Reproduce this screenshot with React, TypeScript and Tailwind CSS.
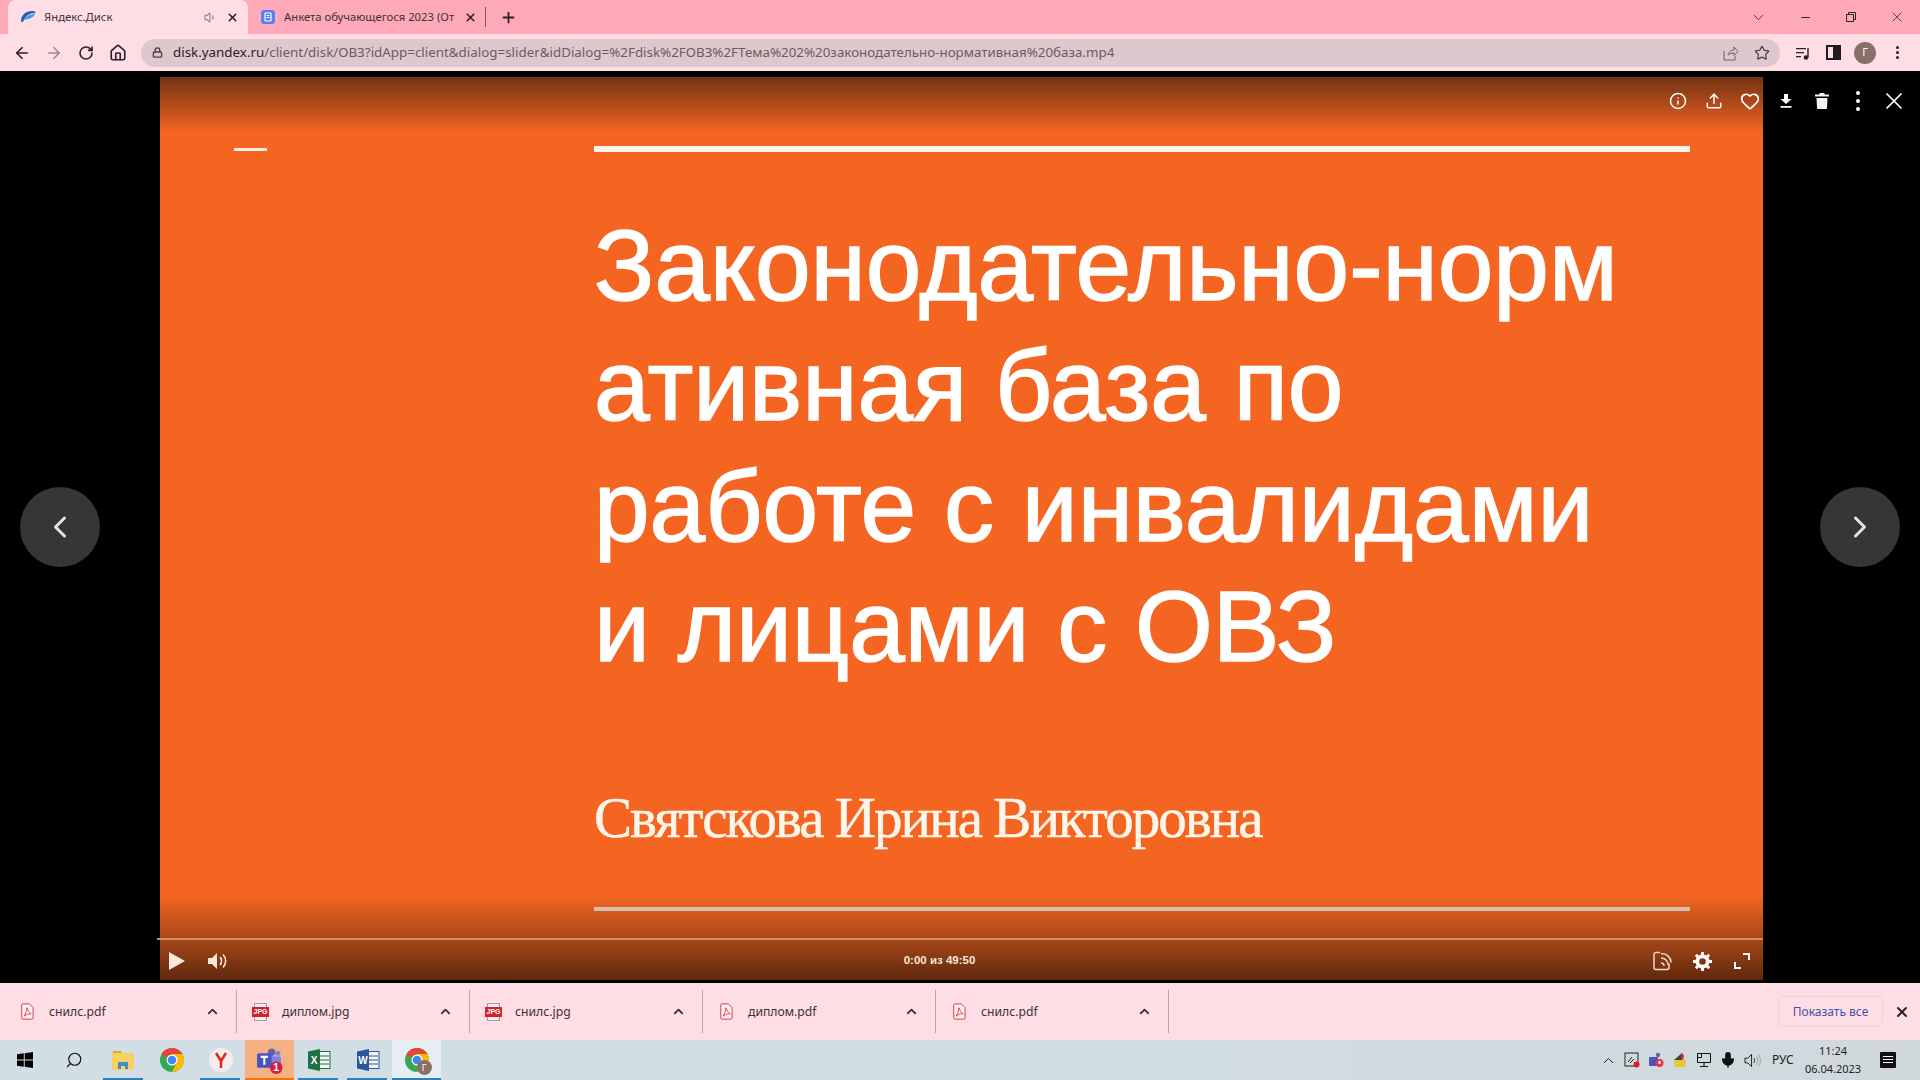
import { ArrowLeft, ArrowRight, RotateCw, Home, Lock, Star, Plus, X, ChevronDown, ChevronUp, ChevronLeft, ChevronRight, Minus, Info, Upload, Heart, Search, Mic, Volume1 } from "lucide-react";

const ui = "font-['Noto_Sans','Open_Sans',sans-serif]";

function YandexDiskIcon() {
  return (
    <svg viewBox="0 0 16 16" className="w-4 h-4">
      <path d="M1 12 C1 6 6 2 12 2 C15 2 16 3 15 4.500 C11 3.500 6 6 3.500 12 C2.800 13.500 1 13.500 1 12Z" fill="#1f5fb8" />
      <path d="M4 11 C6 7 10 5 15 5 C14 8 10 10 4 11Z" fill="#3fa3f0" />
    </svg>
  );
}

function FormsIcon() {
  return (
    <svg viewBox="0 0 16 16" className="w-4 h-4">
      <rect x="1" y="1" width="14" height="14" rx="3" fill="#5a7ff0" />
      <rect x="5" y="4" width="6" height="8" rx="0.500" fill="none" stroke="#fff" strokeWidth="1.200" />
      <path d="M6.500 6.500h3M6.500 8.500h3" stroke="#fff" strokeWidth="1" />
    </svg>
  );
}

function PdfIcon() {
  return (
    <svg viewBox="0 0 14 18" className="w-[13px] h-[17px]">
      <path d="M2 .8h7l4 4v11a1.400 1.400 0 0 1-1.400 1.400H2A1.400 1.400 0 0 1 .8 15.800V2A1.400 1.400 0 0 1 2 .8Z" fill="#fff0f2" stroke="#d8303a" strokeWidth="1" />
      <path d="M6.500 5c1 3 2 5 4.500 6.500-2.500-.3-5 .2-7.500 2.500 1.500-2.500 2.500-5.500 3-9Z" fill="none" stroke="#d8303a" strokeWidth="0.900" />
    </svg>
  );
}

function JpgIcon() {
  return (
    <div className="relative w-[17px] h-[18px] flex items-center justify-center">
      <div className="absolute left-[2px] top-0 w-[13px] h-[18px] border border-[#a89aa0] bg-[#f4eef0]" />
      <span className="relative w-[17px] h-[10px] bg-[#d2232a] text-white text-[7px] leading-[10px] font-bold text-center font-['Liberation_Sans',sans-serif]">JPG</span>
    </div>
  );
}

function ChromeIcon({ size = 24 }: { size?: number }) {
  return (
    <svg viewBox="0 0 24 24" width={size} height={size}>
      <circle cx="12" cy="12" r="12" fill="#34a853" />
      <path d="M12 0A12 12 0 0 1 22.400 6L12 6 5 9.500 1.600 6A12 12 0 0 1 12 0Z" fill="#ea4335" />
      <path d="M22.400 6A12 12 0 0 1 12 24L17 14 12 6Z" fill="#fbbc05" />
      <circle cx="12" cy="12" r="5.500" fill="#fff" />
      <circle cx="12" cy="12" r="4.300" fill="#4285f4" />
    </svg>
  );
}

function WindowsIcon() {
  return (
    <svg viewBox="0 0 16 16" className="w-4 h-4" fill="#000">
      <path d="M0 2.300 6.800 1.300V7.500H0ZM7.700 1.200 16 0V7.500H7.700ZM0 8.500H6.800V14.700L0 13.700ZM7.700 8.500H16V16L7.700 14.800Z" />
    </svg>
  );
}

function ExplorerIcon() {
  return (
    <svg viewBox="0 0 24 24" className="w-6 h-6">
      <path d="M2 3h8l2 3H2Z" fill="#e8a81c" />
      <rect x="1" y="5" width="22" height="17" fill="#f6d264" />
      <path d="M7 14h10v7H14v-3h-4v3H7Z" fill="#3d8fc4" />
    </svg>
  );
}

function YandexIcon() {
  return (
    <svg viewBox="0 0 24 24" className="w-6 h-6">
      <circle cx="12" cy="12" r="12" fill="#f1eeec" />
      <path d="M7 5l5 8 5-8M12 13v7" fill="none" stroke="#e8252a" strokeWidth="2.600" />
    </svg>
  );
}

function TeamsIcon() {
  return (
    <svg viewBox="0 0 26 26" className="w-[27px] h-[27px]">
      <circle cx="15" cy="5" r="3.500" fill="#6264a7" />
      <circle cx="21" cy="6" r="2.500" fill="#7b83eb" />
      <rect x="13" y="9" width="11" height="10" rx="2" fill="#7b83eb" />
      <rect x="1" y="6" width="14" height="14" rx="1.500" fill="#4b53bc" />
      <path d="M4.500 9.500h7M8 9.500V17" stroke="#fff" strokeWidth="2" />
      <circle cx="19.500" cy="20" r="6" fill="#d81e3a" />
      <text x="19.500" y="23.500" textAnchor="middle" fontSize="10" fontWeight="700" fill="#fff" fontFamily="Liberation Sans">1</text>
    </svg>
  );
}

function OfficeIcon({ letter, dark, light }: { letter: string; dark: string; light: string }) {
  return (
    <svg viewBox="0 0 24 24" className="w-6 h-6">
      <rect x="9" y="3.500" width="14" height="17" fill="#f2f5f2" stroke={light} strokeWidth="1" />
      <path d="M13 8h9M13 12h9M13 16h9" stroke={light} strokeWidth="1.200" />
      <path d="M1 3.500 13 1V23L1 20.500Z" fill={dark} />
      <text x="7" y="16" textAnchor="middle" fontSize="10" fontWeight="700" fill="#fff" fontFamily="Liberation Sans">{letter}</text>
    </svg>
  );
}

function Tab({ active, icon, title, speaker }: { active?: boolean; icon: React.ReactNode; title: string; speaker?: boolean }) {
  return (
    <div className={`flex items-center h-[34px] rounded-t-lg pl-[12px] pr-[5px] ${active ? "w-[240px] bg-[#ffdde5]" : "w-[238px]"}`}>
      <div className="w-[16px] shrink-0">{icon}</div>
      <span className={`ml-[8px] mr-[8px] flex-1 text-[11.300px] whitespace-nowrap overflow-hidden text-[#3c3236] ${ui}`}>{title}</span>
      {speaker && <Volume1 size={13} className="text-[#8c8286] mr-[9px]" />}
      <X size={13} strokeWidth={3} className="text-[#2a2226] mr-[4px]" />
    </div>
  );
}

function TabStrip() {
  return (
    <div className="flex items-center h-[34px] bg-[#ffa9b8] pl-[8px]">
      <Tab active icon={<YandexDiskIcon />} title="Яндекс.Диск" speaker />
      <Tab icon={<FormsIcon />} title="Анкета обучающегося 2023 (От" />
      <div className="w-px h-[20px] bg-[#7a5a62] ml-[-1px]" />
      <Plus size={17} strokeWidth={2.500} className="text-[#2a2226] ml-[14px]" />
      <div className="flex-1" />
      <ChevronDown size={17} strokeWidth={1.200} className="text-[#2a2226]" />
      <div className="w-[46px] flex justify-center ml-[15px]"><Minus size={13} className="text-[#2a2226]" /></div>
      <div className="w-[46px] flex justify-center">
        <svg viewBox="0 0 10 10" className="w-[10px] h-[10px]" fill="none" stroke="#2a2226"><path d="M2.500 2.500V.5H9.500V7.500H7.500M.5 2.500H7.500V9.500H.5Z" /></svg>
      </div>
      <div className="w-[46px] flex justify-center"><X size={16} strokeWidth={1.100} className="text-[#2a2226]" /></div>
    </div>
  );
}

function Toolbar() {
  return (
    <div className="flex items-center h-[37px] bg-[#ffdde5] text-[#2a2226] pl-[13px]">
      <ArrowLeft size={18} strokeWidth={2.200} />
      <ArrowRight size={18} strokeWidth={2.200} className="ml-[14px] text-[#9a8a90]" />
      <RotateCw size={16} strokeWidth={2.400} className="ml-[15px]" />
      <Home size={18} strokeWidth={2.200} className="ml-[15px]" />
      <div className="flex items-center ml-[14px] w-[1639px] h-[28px] rounded-full bg-[#dfc8cd] pl-[11px] pr-[10px]">
        <Lock size={11} strokeWidth={3} className="text-[#4a4044]" />
        <span className={`ml-[10px] text-[13.370px] whitespace-nowrap text-[#6a5c62] ${ui}`}>
          <span className="text-[#2a2226]">disk.yandex.ru</span>/client/disk/ОВЗ?idApp=client&dialog=slider&idDialog=%2Fdisk%2FОВЗ%2FТема%202%20законодательно-нормативная%20база.mp4
        </span>
        <div className="flex-1" />
        <svg viewBox="0 0 16 16" className="w-[16px] h-[16px]" fill="none" stroke="#6a5c62" strokeWidth="1"><path d="M1 6v9h11v-4M5 10c1-4 4-5 6-5V2l4 4.500-4 4V8c-2 0-4 .5-6 2Z" /></svg>
        <Star size={16} strokeWidth={1.800} className="ml-[15px] text-[#4a4044]" />
      </div>
      <svg viewBox="0 0 16 16" className="w-[16px] h-[16px] ml-[15px]" fill="#2a2226"><path d="M1 3h10v1.300H1ZM1 7h8v1.300H1ZM1 11h5v1.300H1Z" /><circle cx="11" cy="12.500" r="2.300" /><path d="M12.300 3h1.400v9.500h-1.400Z" /></svg>
      <div className="w-[15px] h-[15px] border-[2px] border-[#1f1a1c] ml-[15px] flex justify-end"><div className="w-[6px] bg-[#1f1a1c]" /></div>
      <div className="w-[22px] h-[22px] rounded-full bg-[#8a6e68] ml-[13px] flex items-center justify-center text-[11px] text-white font-['Noto_Sans',sans-serif]">Г</div>
      <div className="ml-[20px] flex flex-col gap-[2px]">
        <div className="w-[3px] h-[3px] rounded-full bg-[#2a2226]" />
        <div className="w-[3px] h-[3px] rounded-full bg-[#2a2226]" />
        <div className="w-[3px] h-[3px] rounded-full bg-[#2a2226]" />
      </div>
    </div>
  );
}

function Slide() {
  return (
    <div className="h-full bg-[#f46522] flex flex-col text-white pt-[69px] pl-[74px] pr-[73px]">
      <div className="flex items-center h-[6px]">
        <div className="w-[33px] h-[3px] bg-[#fbeee6] mr-[327px]" />
        <div className="flex-1 h-[6px] bg-[#fdf3ea]" />
      </div>
      <div className="pl-[360px] mt-[53px] font-['Liberation_Sans',sans-serif] text-[100px] leading-[120.300px] whitespace-nowrap [-webkit-text-stroke:1.500px_#fff]">
        <div>Законодательно-норм</div>
        <div>ативная база по</div>
        <div>работе с инвалидами</div>
        <div>и лицами с ОВЗ</div>
      </div>
      <div className="pl-[360px] mt-[102px] font-['Liberation_Serif',serif] text-[57px] tracking-[-1.950px] leading-[60px] text-[#fff5ea] whitespace-nowrap [-webkit-text-stroke:0.500px_#fff5ea]">
        Святскова Ирина Викторовна
      </div>
      <div className="ml-[360px] mt-[59px] h-[4px] bg-[#e8dccf]" />
    </div>
  );
}

function TopActions() {
  return (
    <div className="absolute top-[13px] right-[-149px] flex items-center text-white">
      {[
        <Info key="i" size={18} strokeWidth={2} />,
        <Upload key="s" size={18} strokeWidth={2} />,
        <Heart key="h" size={20} strokeWidth={2} />,
      ].map((icon) => (
        <div key={icon.key} className="w-[36px] h-[22px] flex items-center justify-center">{icon}</div>
      ))}
      <div className="w-[36px] h-[22px] flex items-center justify-center">
        <svg viewBox="0 0 12 14" className="w-[12px] h-[14px]" fill="#fff"><path d="M4 0h4v5h3.500L6 10 .5 5H4ZM.5 12h11v1.800H.5Z" /></svg>
      </div>
      <div className="w-[36px] h-[22px] flex items-center justify-center">
        <svg viewBox="0 0 14 16" className="w-[14px] h-[16px]" fill="#f2f2f2"><path d="M5 0h4l1 1.500h4V3.500H0V1.500h4ZM1.500 5h11L12 15a1 1 0 0 1-1 1H3a1 1 0 0 1-1-1Z" /></svg>
      </div>
      <div className="w-[36px] h-[22px] flex flex-col items-center justify-center gap-[4px]">
        <div className="w-[4px] h-[4px] rounded-full bg-white" />
        <div className="w-[4px] h-[4px] rounded-full bg-white" />
        <div className="w-[4px] h-[4px] rounded-full bg-white" />
      </div>
      <div className="w-[36px] h-[22px] flex items-center justify-center"><X size={28} strokeWidth={1.500} /></div>
    </div>
  );
}

function PlayerControls() {
  return (
    <div className="absolute left-0 right-0 bottom-0 h-[84px] bg-gradient-to-b from-transparent to-[#5f290d]">
      <div className="absolute left-[-3px] right-0 top-[42px] h-[2px] bg-[#c8906a]" />
      <div className="flex items-center h-[42px] mt-[44px] pl-[9px] pr-[13px] text-white relative">
        <svg viewBox="0 0 16 18" className="w-[16px] h-[18px]" fill="#fbe6da"><path d="M0 0 16 9 0 18Z" /></svg>
        <svg viewBox="0 0 20 18" className="w-[20px] h-[18px] ml-[23px]" fill="#fbe6da"><path d="M0 6h4l5-5v16l-5-5H0Z" /><path d="M12 5c2 2 2 6 0 8M15 2.500c3.500 3.500 3.500 9.500 0 13" fill="none" stroke="#fbe6da" strokeWidth="1.600" /></svg>
        <span className="absolute left-0 right-[44px] text-center text-[11.500px] font-bold text-[#fbe6da] font-['Liberation_Sans',sans-serif]">0:00 из 49:50</span>
        <div className="flex-1" />
        <svg viewBox="0 0 20 20" className="w-[20px] h-[20px]" fill="none" stroke="#f5d8c6" strokeWidth="1.500"><path d="M8 1.500H4a2 2 0 0 0-2 2v13a2 2 0 0 0 2 2h11a2 2 0 0 0 2-2v-4M9 12c2 0 3 1 3 3M9 7c4 0 7 3 7 7M9 2.500c6 0 10 4 10 9" /></svg>
        <svg viewBox="0 0 20 20" className="w-[19px] h-[19px] ml-[21px]" fill="#fff"><circle cx="10" cy="10" r="5.500" fill="none" stroke="#fff" strokeWidth="4" /><path d="M10 0v5M10 15v5M0 10h5M15 10h5M3 3l3.500 3.500M13.500 13.500 17 17M17 3l-3.500 3.500M6.500 13.500 3 17" stroke="#fff" strokeWidth="3" /></svg>
        <svg viewBox="0 0 16 16" className="w-[16px] h-[16px] ml-[22px]" fill="none" stroke="#fff" strokeWidth="2"><path d="M9 1h6v6M1 9v6h6" /></svg>
      </div>
    </div>
  );
}

function NavButton({ dir }: { dir: "left" | "right" }) {
  return (
    <div className="w-[80px] h-[80px] rounded-full bg-[#363636] flex items-center justify-center text-[#e4e4e4]">
      {dir === "left" ? <ChevronLeft size={36} strokeWidth={2} /> : <ChevronRight size={36} strokeWidth={2} />}
    </div>
  );
}

function Viewer() {
  return (
    <div className="flex h-[912px] bg-black">
      <div className="w-[160px] pl-[20px] flex items-center"><NavButton dir="left" /></div>
      <div className="w-[1603px] pt-[6px] pb-[3px]">
        <div className="relative h-full">
          <Slide />
          <div className="absolute top-0 left-0 right-0 h-[56px] bg-gradient-to-b from-[#743214] to-transparent" />
          <TopActions />
          <PlayerControls />
        </div>
      </div>
      <div className="flex-1 flex items-center justify-end pr-[20px]"><NavButton dir="right" /></div>
    </div>
  );
}

function DownloadItem({ name, kind }: { name: string; kind: "pdf" | "jpg" }) {
  return (
    <div className="flex items-center w-[233px] h-[43px] border-r border-[#b9a6ac] pl-[15px] pr-[16px]">
      <div className="w-[17px] flex justify-center">{kind === "pdf" ? <PdfIcon /> : <JpgIcon />}</div>
      <span className={`ml-[13px] pt-[2px] flex-1 text-[12.200px] text-[#3c3236] ${ui}`}>{name}</span>
      <ChevronUp size={15} strokeWidth={3} className="text-[#3c3236]" />
    </div>
  );
}

function DownloadBar() {
  return (
    <div className="flex items-center h-[57px] bg-[#ffdde5] pl-[4px]">
      <DownloadItem name="снилс.pdf" kind="pdf" />
      <DownloadItem name="диплом.jpg" kind="jpg" />
      <DownloadItem name="снилс.jpg" kind="jpg" />
      <DownloadItem name="диплом.pdf" kind="pdf" />
      <DownloadItem name="снилс.pdf" kind="pdf" />
      <div className="flex-1" />
      <div className={`w-[105px] h-[31px] rounded-[4px] border border-[#f3d2da] flex items-center justify-center text-[12px] text-[#4353ab] ${ui}`}>Показать все</div>
      <X size={16} strokeWidth={3} className="text-[#2a2226] ml-[11px] mr-[10px]" />
    </div>
  );
}

function TaskSlot({ children, className = "", bar = "" }: { children: React.ReactNode; className?: string; bar?: string }) {
  return (
    <div className={`relative w-[49px] h-[40px] flex items-center justify-center ${className}`}>
      {children}
      {bar && <div className={`absolute bottom-0 h-[2px] ${bar}`} />}
    </div>
  );
}

function Taskbar() {
  return (
    <div className="flex items-center h-[40px] bg-gradient-to-r from-[#d1dee6] via-[#d1dee6] to-[#d0d8dc]">
      <TaskSlot><WindowsIcon /></TaskSlot>
      <TaskSlot><Search size={18} strokeWidth={1.500} className="-scale-x-100 text-[#111]" /></TaskSlot>
      <TaskSlot bar="left-[5px] w-[40px] bg-[#2f7eb5]"><ExplorerIcon /></TaskSlot>
      <TaskSlot><ChromeIcon /></TaskSlot>
      <TaskSlot bar="left-[4px] w-[40px] bg-[#2f7eb5]"><YandexIcon /></TaskSlot>
      <TaskSlot className="bg-[#f5b184]" bar="left-0 w-full bg-[#f5730f]"><TeamsIcon /></TaskSlot>
      <TaskSlot bar="left-[4px] w-[40px] bg-[#2f7eb5]"><OfficeIcon letter="X" dark="#1e7145" light="#1e7145" /></TaskSlot>
      <TaskSlot bar="left-[4px] w-[40px] bg-[#2f7eb5]"><OfficeIcon letter="W" dark="#2b579a" light="#2b579a" /></TaskSlot>
      <TaskSlot className="bg-[#e6eef3]" bar="left-0 w-full bg-[#2f7eb5]">
        <div className="relative">
          <ChromeIcon />
          <div className="absolute right-[-3px] bottom-[-3px] w-[15px] h-[15px] rounded-full bg-[#8a6e68] text-white text-[9px] leading-[15px] text-center font-['Noto_Sans',sans-serif]">Г</div>
        </div>
      </TaskSlot>
      <div className="flex-1" />
      <ChevronUp size={17} strokeWidth={1.300} className="text-[#111]" />
      <div className="w-[24px] flex justify-center ml-[3px]">
        <svg viewBox="0 0 16 16" className="w-[16px] h-[16px]" fill="none" stroke="#222"><rect x="1" y="1" width="13" height="13" /><path d="M4 10l4-5M6 11l4-4" /><circle cx="12.500" cy="12.500" r="3" fill="#e8161e" stroke="none" /></svg>
      </div>
      <div className="w-[24px] flex justify-center">
        <svg viewBox="0 0 16 16" className="w-[16px] h-[16px]"><circle cx="10" cy="3" r="2.200" fill="#6264a7" /><rect x="1" y="5" width="9" height="9" rx="1" fill="#4b53bc" /><circle cx="11.500" cy="11" r="4" fill="#e0394a" /><rect x="10.500" y="9" width="2" height="3" fill="#fff" /></svg>
      </div>
      <div className="w-[24px] flex justify-center">
        <svg viewBox="0 0 16 16" className="w-[16px] h-[16px]"><path d="M2 8l8-7 2 3-2 4Z" fill="#444" /><path d="M10 1l2 3-1 4-2-1Z" fill="#d8303a" /><rect x="2" y="8" width="12" height="7" fill="#e5c93a" /></svg>
      </div>
      <div className="w-[24px] flex justify-center">
        <svg viewBox="0 0 16 16" className="w-[16px] h-[16px]" fill="none" stroke="#111"><path d="M1.500 1.500h13v9h-13ZM8 10.500v4M4 14.500h8M1.500 1.500h4v4h-4Z" /></svg>
      </div>
      <div className="w-[24px] flex justify-center"><Mic size={18} fill="#111" strokeWidth={1.500} className="text-[#111]" /></div>
      <div className="w-[24px] flex justify-center">
        <svg viewBox="0 0 18 16" className="w-[17px] h-[15px]" fill="none" stroke="#111"><path d="M1 5.500h3l4-4v13l-4-4H1Z" /><path d="M10.500 5.500c1 1.500 1 3.500 0 5" /><path d="M13 3.500c2 2.500 2 6.500 0 9M15.500 2c2.500 3.500 2.500 8.500 0 12" stroke="#999" /></svg>
      </div>
      <span className={`ml-[8px] w-[28px] text-[12px] text-[#222] ${ui}`}>РУС</span>
      <div className={`w-[66px] text-center text-[11px] leading-[18px] text-[#222] ${ui}`}>
        <div>11:24</div>
        <div>06.04.2023</div>
      </div>
      <div className="ml-[14px] mr-[24px] relative w-[16px] h-[16px] bg-[#111] rounded-[1px]">
        <div className="absolute left-[3px] right-[3px] top-[4px] h-px bg-white" />
        <div className="absolute left-[3px] right-[3px] top-[7px] h-px bg-white" />
        <div className="absolute left-[3px] right-[3px] top-[10px] h-px bg-white" />
      </div>
    </div>
  );
}

export default function App() {
  return (
    <div className="w-[1920px] h-[1080px] overflow-hidden flex flex-col bg-black">
      <TabStrip />
      <Toolbar />
      <Viewer />
      <DownloadBar />
      <Taskbar />
    </div>
  );
}
